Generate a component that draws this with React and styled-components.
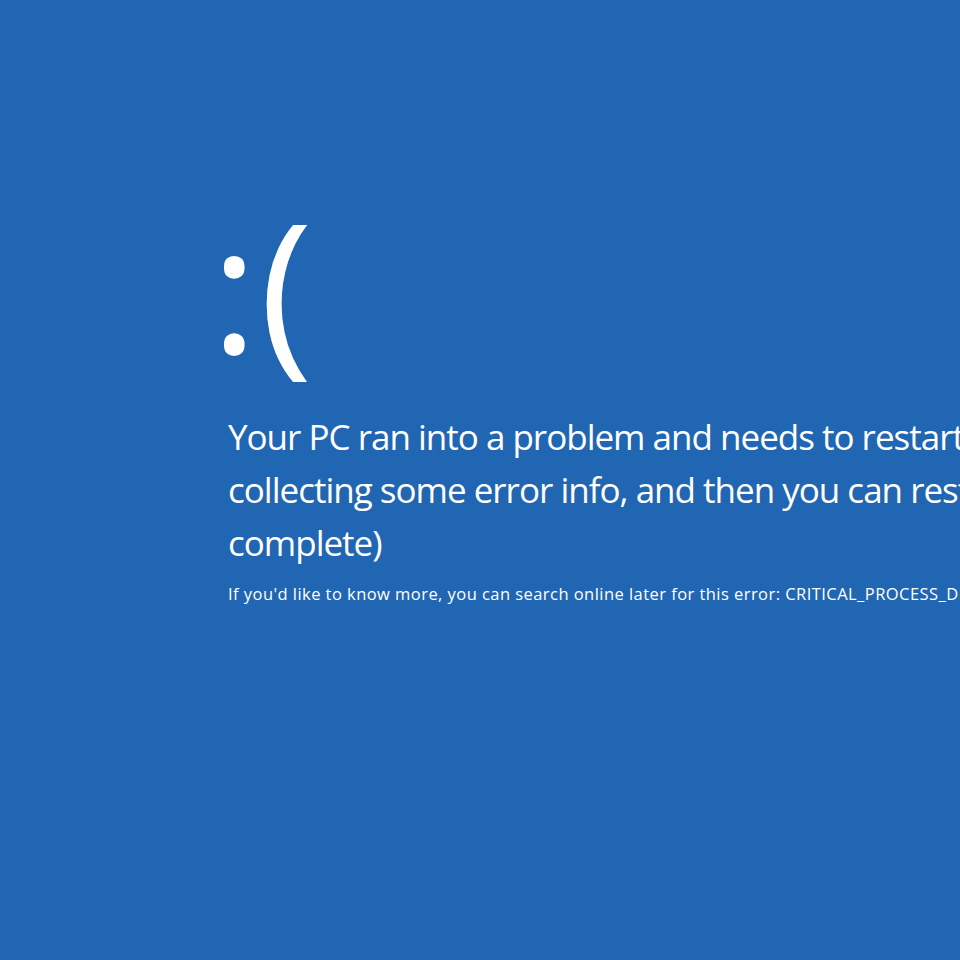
import React from "react";
import styled, { createGlobalStyle } from "styled-components";

const GlobalStyle = createGlobalStyle`
  html, body {
    margin: 0;
    padding: 0;
    background: #2166b2;
    overflow: hidden;
  }
`;

const Screen = styled.main`
  width: 960px;
  height: 960px;
  background: #2166b2;
  color: #ffffff;
  font-family: "Open Sans", "Noto Sans", sans-serif;
  overflow: hidden;
  box-sizing: border-box;
  padding: 190px 0 0 228px;
`;

const Face = styled.div`
  display: flex;
  align-items: baseline;
  height: 220px;
  line-height: 190px;
  white-space: nowrap;
`;

const Colon = styled.span`
  font-size: 177px;
  font-weight: 500;
  margin-left: -17px;
`;

const Paren = styled.span`
  font-size: 180px;
  font-weight: 400;
  margin-left: 2px;
`;

const Message = styled.p`
  margin: 0;
  font-size: 35px;
  letter-spacing: -1px;
  font-weight: 400;
  line-height: 53px;
  white-space: nowrap;
`;

const Hint = styled.p`
  margin: 15px 0 0;
  font-size: 16.5px;
  letter-spacing: 0.45px;
  line-height: 20px;
  white-space: nowrap;
`;

export default function App() {
  return (
    <>
      <GlobalStyle />
      <Screen>
        <Face>
          <Colon>:</Colon>
          <Paren>(</Paren>
        </Face>
        <Message>
          Your PC ran into a problem and needs to restart. We're just
          <br />
          collecting some error info, and then you can restart. (100%
          <br />
          complete)
        </Message>
        <Hint>
          If you'd like to know more, you can search online later for this
          error: CRITICAL_PROCESS_DIED
        </Hint>
      </Screen>
    </>
  );
}
